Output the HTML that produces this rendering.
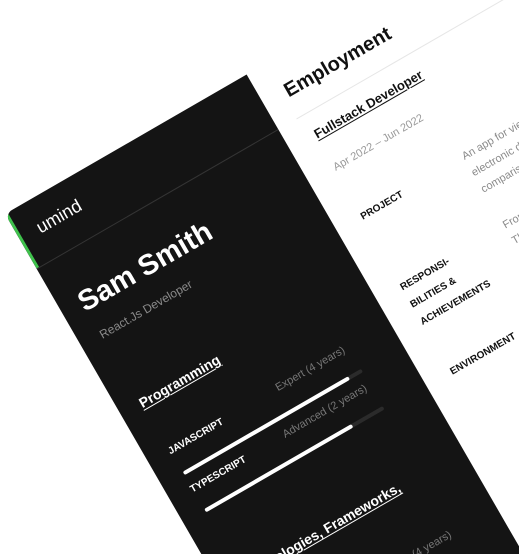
<!DOCTYPE html>
<html><head><meta charset="utf-8"><style>
html,body{margin:0;padding:0;width:519px;height:554px;overflow:hidden;background:#fff;font-family:"Liberation Sans",sans-serif}
.clip{position:fixed;left:0;top:0;width:519px;height:554px;overflow:hidden}
.wrap{position:absolute;left:5px;top:214px;width:900px;height:700px;transform:rotate(-30deg);transform-origin:0 0}
.panel{position:absolute;left:0;top:0;width:279px;height:700px;background:#141414;border-top-left-radius:8px;overflow:hidden}
.green{position:absolute;left:0;top:0;width:3px;height:63px;background:#3fc24c}
.t{position:absolute;white-space:nowrap;line-height:1}
.w{color:#fff}
.lab{font-size:10px;font-weight:bold}
.track{position:absolute;left:25px;width:206px;height:4px;border-radius:2px;background:#2b2b2b}
.fill{height:4px;border-radius:2px;background:#fff}
u{text-decoration:underline;text-decoration-thickness:1px;text-underline-offset:2px}
</style></head><body>
<div class="clip">
<div class="wrap">
 <div class="panel">
  <div class="green"></div>
  <div class="t w" style="left:21px;top:20px;font-size:18px">umind</div>
  <div style="position:absolute;left:0;top:63px;width:279px;height:1px;background:#343434"></div>
  <div class="t w" style="left:20px;top:102px;font-size:29px;font-weight:bold">Sam Smith</div>
  <div class="t" style="left:22px;top:147px;font-size:12px;color:#8a8a8a">React.Js Developer</div>
  <div class="t w" style="left:22px;top:225px;font-size:14px;font-weight:bold"><u>Programming</u></div>
  <div class="t w lab" style="left:23px;top:284px">JAVASCRIPT</div>
  <div class="t" style="left:100px;width:126px;text-align:right;top:282px;font-size:11px;color:#777">Expert (4 years)</div>
  <div class="track" style="top:312px"><div class="fill" style="width:191px"></div></div>
  <div class="t w lab" style="left:23px;top:328px">TYPESCRIPT</div>
  <div class="t" style="left:100px;width:126px;text-align:right;top:326px;font-size:11px;color:#777">Advanced (2 years)</div>
  <div class="track" style="top:355px"><div class="fill" style="width:170px"></div></div>
  <div class="t w" style="left:22px;top:426px;font-size:14px;font-weight:bold"><u>Technologies, Frameworks,</u></div>
  <div class="t w lab" style="left:23px;top:497px">REACT</div>
  <div class="t" style="left:100px;width:126px;text-align:right;top:495px;font-size:11px;color:#777">Expert (4 years)</div>
  <div class="track" style="top:525px"><div class="fill" style="width:191px"></div></div>
 </div>
 <div class="t" style="left:304px;top:25px;font-size:20px;font-weight:bold;color:#111">Employment</div>
 <div style="position:absolute;left:300px;top:63px;width:500px;height:1px;background:#e6e6e6"></div>
 <div class="t" style="left:308px;top:80px;font-size:13px;font-weight:bold;color:#111"><u>Fullstack Developer</u></div>
 <div class="t" style="left:308px;top:120px;font-size:11px;color:#999">Apr 2022 – Jun 2022</div>
 <div class="t lab" style="left:307px;top:177px;color:#111">PROJECT</div>
 <div class="t" style="left:425px;top:171px;font-size:11px;color:#8a8a8a;line-height:19px">An app for viewing<br>electronic devices<br>comparison</div>
 <div class="t lab" style="left:306px;top:253px;color:#111;line-height:20px">RESPONSI-<br>BILITIES &amp;<br>ACHIEVEMENTS</div>
 <div class="t" style="left:426px;top:251px;font-size:11px;color:#8a8a8a;line-height:18px">From scratch<br>The app</div>
 <div class="t lab" style="left:307px;top:356px;color:#111">ENVIRONMENT</div>
</div>
</div>
</body></html>
